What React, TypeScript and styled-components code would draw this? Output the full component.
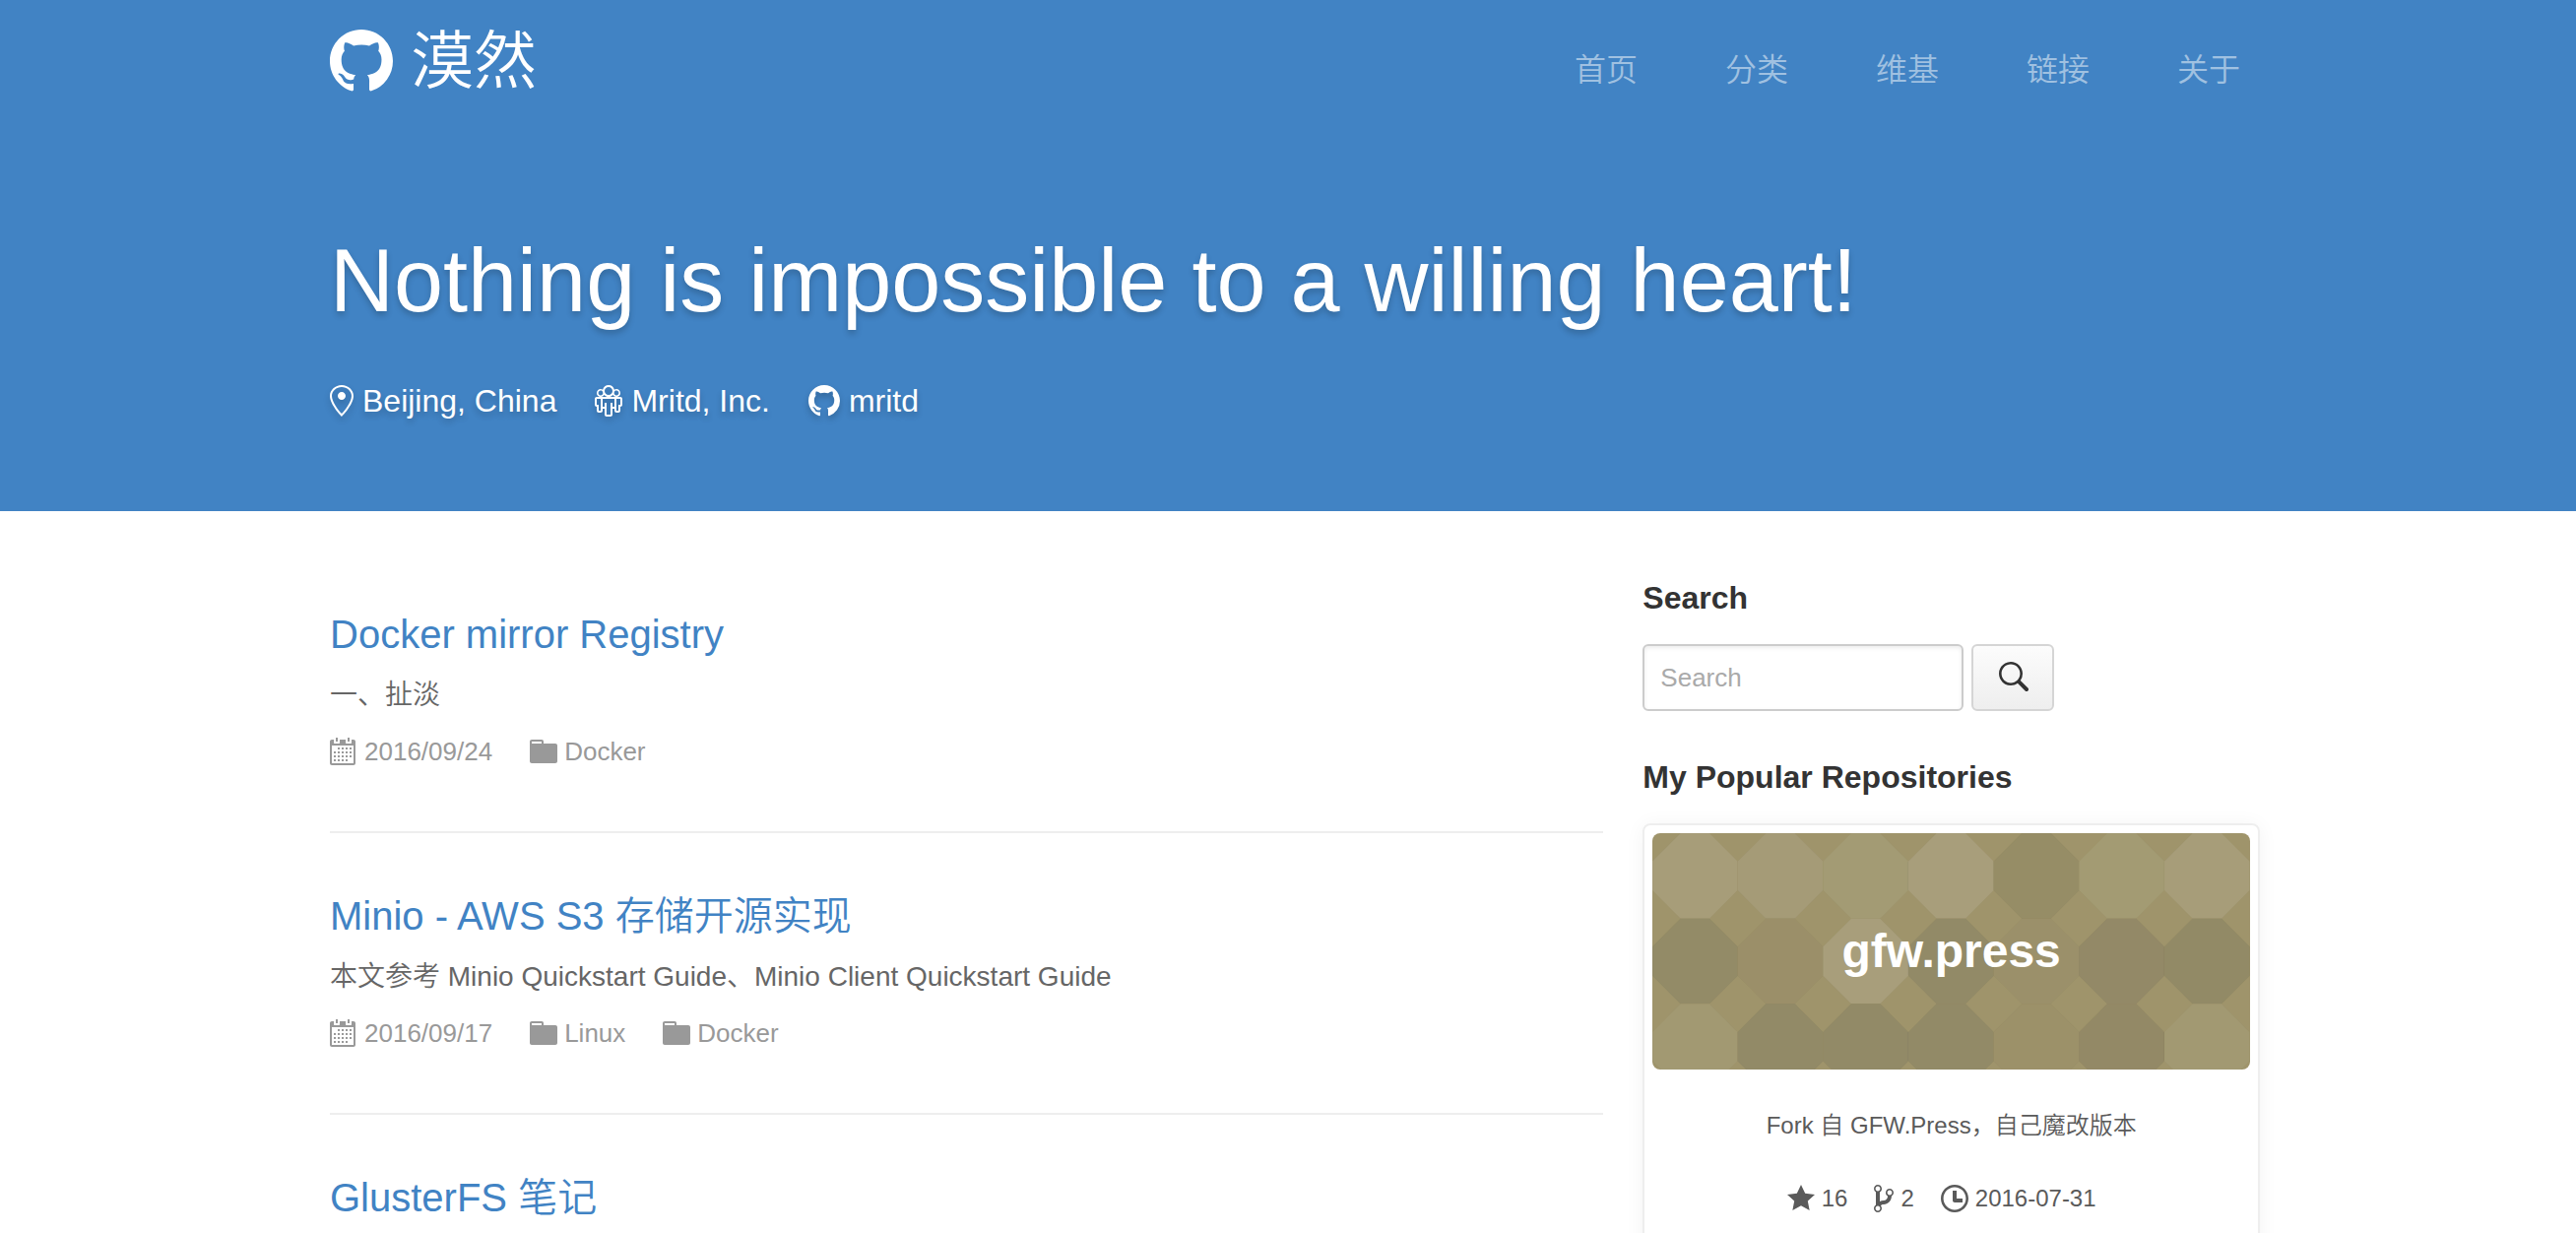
import React from "react";
import styled, { createGlobalStyle } from "styled-components";

const GlobalStyle = createGlobalStyle`
  * { box-sizing: border-box; }
  body {
    margin: 0;
    background: #fff;
    color: #5a5a5a;
    font-family: "Liberation Sans", "Noto Sans CJK SC", sans-serif;
    font-size: 28px;
    font-weight: 350;
    line-height: 40px;
  }
  a { color: inherit; text-decoration: none; }
  h1, h2, h3, p, ul { margin: 0; padding: 0; }
  ul { list-style: none; }
`;

const icons = {
  github: {
    box: "0 0 16 16",
    d: "M8 0C3.58 0 0 3.58 0 8c0 3.54 2.29 6.53 5.47 7.59.4.07.55-.17.55-.38 0-.19-.01-.82-.01-1.49-2.01.37-2.53-.49-2.69-.94-.09-.23-.48-.94-.82-1.13-.28-.15-.68-.52-.01-.53.63-.01 1.08.58 1.23.82.72 1.21 1.87.87 2.33.66.07-.52.28-.87.51-1.07-1.78-.2-3.64-.89-3.64-3.95 0-.87.31-1.59.82-2.15-.08-.2-.36-1.02.08-2.12 0 0 .67-.21 2.2.82.64-.18 1.32-.27 2-.27.68 0 1.36.09 2 .27 1.53-1.04 2.2-.82 2.2-.82.44 1.1.16 1.92.08 2.12.51.56.82 1.27.82 2.15 0 3.07-1.87 3.75-3.65 3.95.29.25.54.73.54 1.48 0 1.07-.01 1.93-.01 2.2 0 .21.15.46.55.38A8.013 8.013 0 0 0 16 8c0-4.42-3.58-8-8-8z",
  },
  location: {
    box: "0 0 12 16",
    d: "M6 0C2.69 0 0 2.5 0 5.5 0 10.02 6 16 6 16s6-5.98 6-10.5C12 2.5 9.31 0 6 0zm0 14.55C4.14 12.52 1 8.44 1 5.5 1 3.02 3.25 1 6 1c1.34 0 2.61.48 3.56 1.36.92.86 1.44 1.97 1.44 3.14 0 2.94-3.14 7.02-5 9.05zM8 5.5c0 1.11-.89 2-2 2-1.11 0-2-.89-2-2 0-1.11.89-2 2-2 1.11 0 2 .89 2 2z",
  },
  organization: {
    box: "0 0 14 16",
    d: "M4.75 4.95C5.3 5.59 6.09 6 7 6c.91 0 1.7-.41 2.25-1.05A1.993 1.993 0 0 0 13 4c0-1.11-.89-2-2-2-.41 0-.77.13-1.08.33A3.01 3.01 0 0 0 7 0C5.58 0 4.39 1 4.08 2.33 3.77 2.13 3.41 2 3 2c-1.11 0-2 .89-2 2a1.993 1.993 0 0 0 3.75.95zm5.2-1.52c.2-.38.59-.64 1.05-.64.66 0 1.2.55 1.2 1.2 0 .65-.55 1.2-1.2 1.2-.65 0-1.17-.53-1.19-1.17.06-.19.11-.39.14-.59zM7 .98c1.11 0 2.02.91 2.02 2.02 0 1.11-.91 2.02-2.02 2.02-1.11 0-2.02-.91-2.02-2.02C4.98 1.89 5.89.98 7 .98zM3 5.2c-.66 0-1.2-.55-1.2-1.2 0-.65.55-1.2 1.2-1.2.45 0 .84.27 1.05.64.03.2.08.41.14.59C4.17 4.67 3.66 5.2 3 5.2zM13 6H1c-.55 0-1 .45-1 1v3c0 .55.45 1 1 1v2c0 .55.45 1 1 1h1c.55 0 1-.45 1-1v-1h1v3c0 .55.45 1 1 1h2c.55 0 1-.45 1-1v-3h1v1c0 .55.45 1 1 1h1c.55 0 1-.45 1-1v-2c.55 0 1-.45 1-1V7c0-.55-.45-1-1-1zM3 13H2v-3H1V7h2v6zm7-2H9V9H8v6H6V9H5v2H4V7h6v4zm3-1h-1v3h-1V7h2v3z",
  },
  calendar: {
    box: "1 0 14 16",
    d: "M13 2h-1v1.5c0 .28-.22.5-.5.5h-2c-.28 0-.5-.22-.5-.5V2H6v1.5c0 .28-.22.5-.5.5h-2c-.28 0-.5-.22-.5-.5V2H2c-.55 0-1 .45-1 1v11c0 .55.45 1 1 1h11c.55 0 1-.45 1-1V3c0-.55-.45-1-1-1zm0 12H2V5h11v9zM5 3H4V1h1v2zm6 0h-1V1h1v2zM6 7H5V6h1v1zm2 0H7V6h1v1zm2 0H9V6h1v1zm2 0h-1V6h1v1zM4 9H3V8h1v1zm2 0H5V8h1v1zm2 0H7V8h1v1zm2 0H9V8h1v1zm2 0h-1V8h1v1zm-8 2H3v-1h1v1zm2 0H5v-1h1v1zm2 0H7v-1h1v1zm2 0H9v-1h1v1zm2 0h-1v-1h1v1zm-8 2H3v-1h1v1zm2 0H5v-1h1v1zm2 0H7v-1h1v1zm2 0H9v-1h1v1z",
  },
  folder: {
    box: "0 0 14 16",
    d: "M13 4H7V3c0-.66-.31-1-1-1H1c-.55 0-1 .45-1 1v10c0 .55.45 1 1 1h12c.55 0 1-.45 1-1V5c0-.55-.45-1-1-1zM6 4H1V3h5v1z",
  },
  star: {
    box: "0 0 14 16",
    d: "M14 6l-4.9-.64L7 1 4.9 5.36 0 6l3.6 3.26L2.67 14 7 11.67 11.33 14l-.93-4.74z",
  },
  branch: {
    box: "0 0 10 16",
    d: "M10 5c0-1.11-.89-2-2-2a1.993 1.993 0 0 0-1 3.72v.3c-.02.52-.23.98-.63 1.38-.4.4-.86.61-1.38.63-.83.02-1.48.16-2 .45V4.72a1.993 1.993 0 0 0-1-3.72C.88 1 0 1.89 0 3a2 2 0 0 0 1 1.72v6.56c-.59.35-1 .99-1 1.72 0 1.11.89 2 2 2 1.11 0 2-.89 2-2 0-.53-.2-1-.53-1.36.09-.06.48-.41.59-.47.25-.11.56-.17.94-.17 1.05-.05 1.95-.45 2.75-1.25S8.95 7.77 9 6.73h-.02C9.59 6.37 10 5.73 10 5zM2 1.8c.66 0 1.2.55 1.2 1.2 0 .65-.55 1.2-1.2 1.2C1.35 4.2.8 3.65.8 3c0-.65.55-1.2 1.2-1.2zm0 12.41c-.66 0-1.2-.55-1.2-1.2 0-.65.55-1.2 1.2-1.2.65 0 1.2.55 1.2 1.2 0 .65-.55 1.2-1.2 1.2zm6-8c-.66 0-1.2-.55-1.2-1.2 0-.65.55-1.2 1.2-1.2.65 0 1.2.55 1.2 1.2 0 .65-.55 1.2-1.2 1.2z",
  },
  clock: {
    box: "0 0 14 16",
    d: "M8 8h3v2H7c-.55 0-1-.45-1-1V4h2v4zM7 2.3c3.14 0 5.7 2.56 5.7 5.7s-2.56 5.7-5.7 5.7A5.71 5.71 0 0 1 1.3 8c0-3.14 2.56-5.7 5.7-5.7zM7 1C3.14 1 0 4.14 0 8s3.14 7 7 7 7-3.14 7-7-3.14-7-7-7z",
  },
  search: {
    box: "0 0 16 16",
    d: "M15.7 13.3l-3.81-3.83A5.93 5.93 0 0 0 13 6c0-3.31-2.69-6-6-6S1 2.69 1 6s2.69 6 6 6c1.3 0 2.48-.41 3.47-1.11l3.83 3.81c.19.2.45.3.7.3.25 0 .52-.09.7-.3a.996.996 0 0 0 0-1.41v.01zM7 10.7c-2.59 0-4.7-2.11-4.7-4.7 0-2.59 2.11-4.7 4.7-4.7 2.59 0 4.7 2.11 4.7 4.7 0 2.59-2.11 4.7-4.7 4.7z",
  },
};

type IconName = keyof typeof icons;

const Glyph = styled.svg<{ $size: number }>`
  display: block;
  flex: none;
  height: ${(p) => p.$size}px;
  fill: currentColor;
`;

function Icon({ name, size = 32 }: { name: IconName; size?: number }) {
  const { box, d } = icons[name];
  return (
    <Glyph $size={size} viewBox={box} aria-hidden="true">
      <path d={d} />
    </Glyph>
  );
}

const Container = styled.div`
  width: 100%;
  max-width: 2014px;
  margin: 0 auto;
  padding-left: 14px;
`;

const Masthead = styled.header`
  background: #4183c4;
  color: #fff;
  padding-bottom: 92px;
`;

const TopBar = styled.div`
  display: flex;
  justify-content: space-between;
  align-items: flex-start;
  padding: 30px 20px 0;
`;

const Logo = styled.a`
  display: flex;
  align-items: center;
  gap: 18px;
  font-size: 64px;
  line-height: 64px;
`;

const Nav = styled.nav`
  display: flex;
  gap: 89px;
  padding: 21px 20px 0 0;
`;

const NavLink = styled.a`
  color: rgba(255, 255, 255, 0.5);
  font-size: 32px;
  line-height: 40px;
`;

const Hero = styled.div`
  padding: 137px 20px 0;
  text-shadow: 0 4px 6px rgba(0, 0, 0, 0.2);

  svg {
    filter: drop-shadow(0 4px 3px rgba(0, 0, 0, 0.2));
  }
`;

const Slogan = styled.h1`
  font-size: 90px;
  font-weight: 400;
  line-height: 108px;
`;

const Profile = styled.ul`
  display: flex;
  gap: 39px;
  margin-top: 48px;
  font-size: 32px;
`;

const ProfileItem = styled.li`
  display: flex;
  align-items: center;
  gap: 9px;
`;

const Columns = styled(Container)`
  display: flex;
`;

const Main = styled.main`
  width: 66.6667%;
  padding: 41px 20px 0;
`;

const Sidebar = styled.aside`
  width: 33.3333%;
  padding: 68px 20px 60px;
`;

const Post = styled.article`
  padding: 56px 0 61px;
  border-bottom: 2px solid #eee;
`;

const PostTitle = styled.h2`
  color: #4183c4;
  font-size: 40px;
  font-weight: 350;
  line-height: 56px;
`;

const Excerpt = styled.p`
  margin-top: 14px;
  color: #666;
`;

const PostMeta = styled.ul`
  display: flex;
  gap: 38px;
  margin-top: 17px;
  color: #999;
  font-size: 26px;
`;

const MetaItem = styled.li`
  display: flex;
  align-items: center;
  gap: 7px;
`;

const MetaLink = styled(MetaItem).attrs({ as: "a" })``;

const SideTitle = styled.h3`
  color: #333;
  font-size: 32px;
  font-weight: 700;
  line-height: 40px;
`;

const SearchForm = styled.form`
  display: flex;
  gap: 8px;
  margin: 27px 0 47px;
`;

const SearchInput = styled.input`
  width: 326px;
  height: 68px;
  padding: 0 16px;
  border: 2px solid #ccc;
  border-radius: 6px;
  background: #fff;
  box-shadow: inset 0 2px 4px rgba(0, 0, 0, 0.075);
  color: #333;
  font: inherit;
  font-size: 26px;

  &::placeholder {
    color: #aaa;
    opacity: 1;
  }
`;

const SearchButton = styled.button`
  display: flex;
  align-items: center;
  justify-content: center;
  width: 84px;
  height: 68px;
  padding: 0;
  border: 2px solid #d5d5d5;
  border-radius: 6px;
  background: linear-gradient(#fcfcfc, #eee);
  color: #333;
`;

const RepoCard = styled.section`
  margin-top: 27px;
  padding: 8px 8px 40px;
  border: 2px solid #eee;
  border-radius: 8px;
  box-shadow: 0 2px 20px rgba(0, 0, 0, 0.05);
  text-align: center;
  font-size: 24px;
`;

const Banner = styled.a`
  display: grid;
  height: 240px;
  border-radius: 8px;
  overflow: hidden;
  background: #9f946b;
  color: #fff;

  > * {
    grid-area: 1 / 1;
  }
`;

const Pattern = styled.svg`
  display: block;
  width: 100%;
  height: 240px;
`;

const BannerName = styled.span`
  align-self: center;
  justify-self: center;
  z-index: 1;
  font-size: 48px;
  font-weight: 700;
  line-height: 56px;
`;

const RepoText = styled.p`
  margin-top: 37px;
`;

const Stats = styled.ul`
  display: flex;
  justify-content: center;
  gap: 27px;
  margin-top: 34px;
  padding-right: 20px;
`;

const tileRows = [
  ["#a79d79", "#a59b77", "#a39b74", "#a89e7b", "#968d66", "#a39b73", "#a79d79"],
  ["#938b67", "#9b8f69", "#a89e7b", "#928a67", "#9b906a", "#938967", "#928a66"],
  ["#a29972", "#928a67", "#928a67", "#928a67", "#9c9169", "#938966", "#a29972"],
];

function OctagonPattern() {
  return (
    <Pattern viewBox="0 0 700 277" preserveAspectRatio="xMidYMin slice" aria-hidden="true">
      {tileRows.map((row, y) =>
        row.map((fill, x) => (
          <polygon
            key={`${x}-${y}`}
            points="33,0 67,0 100,33 100,67 67,100 33,100 0,67 0,33"
            transform={`translate(${x * 100} ${y * 100})`}
            fill={fill}
            stroke="#000"
            strokeOpacity={0.02}
          />
        ))
      )}
    </Pattern>
  );
}

const navItems = ["首页", "分类", "维基", "链接", "关于"];

const profile: { icon: IconName; text: string }[] = [
  { icon: "location", text: "Beijing, China" },
  { icon: "organization", text: "Mritd, Inc." },
  { icon: "github", text: "mritd" },
];

const posts = [
  { title: "Docker mirror Registry", excerpt: "一、扯淡", date: "2016/09/24", tags: ["Docker"] },
  {
    title: "Minio - AWS S3 存储开源实现",
    excerpt: "本文参考 Minio Quickstart Guide、Minio Client Quickstart Guide",
    date: "2016/09/17",
    tags: ["Linux", "Docker"],
  },
  { title: "GlusterFS 笔记", excerpt: "", date: "", tags: [] },
];

const stats: { icon: IconName; text: string }[] = [
  { icon: "star", text: "16" },
  { icon: "branch", text: "2" },
  { icon: "clock", text: "2016-07-31" },
];

export default function App() {
  return (
    <>
      <GlobalStyle />
      <Masthead>
        <Container>
          <TopBar>
            <Logo href="#">
              <Icon name="github" size={64} />
              漠然
            </Logo>
            <Nav>
              {navItems.map((item) => (
                <NavLink href="#" key={item}>{item}</NavLink>
              ))}
            </Nav>
          </TopBar>
          <Hero>
            <Slogan>Nothing is impossible to a willing heart!</Slogan>
            <Profile>
              {profile.map((p) => (
                <ProfileItem key={p.text}>
                  <Icon name={p.icon} />
                  {p.text}
                </ProfileItem>
              ))}
            </Profile>
          </Hero>
        </Container>
      </Masthead>
      <Columns>
        <Main>
          {posts.map((post) => (
            <Post key={post.title}>
              <PostTitle><a href="#">{post.title}</a></PostTitle>
              {post.excerpt && <Excerpt>{post.excerpt}</Excerpt>}
              {post.date && (
                <PostMeta>
                  <MetaItem><Icon name="calendar" />{post.date}</MetaItem>
                  {post.tags.map((tag) => (
                    <li key={tag}>
                      <MetaLink href="#"><Icon name="folder" />{tag}</MetaLink>
                    </li>
                  ))}
                </PostMeta>
              )}
            </Post>
          ))}
        </Main>
        <Sidebar>
          <SideTitle>Search</SideTitle>
          <SearchForm onSubmit={(e) => e.preventDefault()}>
            <SearchInput type="text" placeholder="Search" aria-label="Search" />
            <SearchButton type="submit" aria-label="Search"><Icon name="search" /></SearchButton>
          </SearchForm>
          <SideTitle>My Popular Repositories</SideTitle>
          <RepoCard>
            <Banner href="#">
              <OctagonPattern />
              <BannerName>gfw.press</BannerName>
            </Banner>
            <RepoText>Fork 自 GFW.Press，自己魔改版本</RepoText>
            <Stats>
              {stats.map((s) => (
                <MetaItem key={s.text}><Icon name={s.icon} />{s.text}</MetaItem>
              ))}
            </Stats>
          </RepoCard>
        </Sidebar>
      </Columns>
    </>
  );
}
